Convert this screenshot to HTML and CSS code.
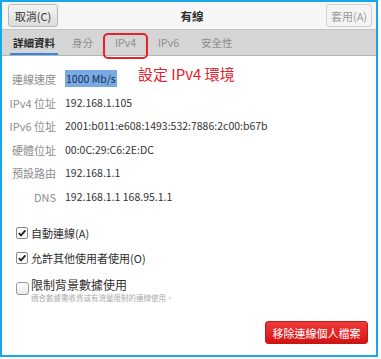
FILE: index.html
```html
<!DOCTYPE html>
<html>
<head>
<meta charset="utf-8">
<link rel="stylesheet" href="styles.css">
</head>
<body>
<div class="frame">
  <div class="header">
    <button class="btn cancel">取消(C)</button>
    <div class="title">有線</div>
    <button class="btn apply">套用(A)</button>
  </div>
  <div class="tabs">
    <div class="tab active">詳細資料</div>
    <div class="tab">身分</div>
    <div class="tab ipv4">IPv4<span class="circle"></span></div>
    <div class="tab">IPv6</div>
    <div class="tab">安全性</div>
  </div>
  <div class="content">
    <div class="info">
      <div class="label">連線速度</div><div class="value"><span class="sel">1000 Mb/s</span><span class="note">設定 IPv4 環境</span></div>
      <div class="label">IPv4 位址</div><div class="value">192.168.1.105</div>
      <div class="label">IPv6 位址</div><div class="value">2001:b011:e608:1493:532:7886:2c00:b67b</div>
      <div class="label">硬體位址</div><div class="value">00:0C:29:C6:2E:DC</div>
      <div class="label">預設路由</div><div class="value">192.168.1.1</div>
      <div class="label">DNS</div><div class="value">192.168.1.1 168.95.1.1</div>
    </div>
    <div class="checks">
      <div class="check"><span class="box checked"><svg viewBox="0 0 10 10" width="10" height="10"><path d="M1.8 5.2 L4 7.4 L8.4 2.4" fill="none" stroke="#222" stroke-width="1.8"/></svg></span>自動連線(A)</div>
      <div class="check"><span class="box checked"><svg viewBox="0 0 10 10" width="10" height="10"><path d="M1.8 5.2 L4 7.4 L8.4 2.4" fill="none" stroke="#222" stroke-width="1.8"/></svg></span>允許其他使用者使用(O)</div>
      <div class="check limit"><span class="box round"></span><div><div>限制背景數據使用</div><div class="sub">適合數據需收費或有流量限制的連線使用。</div></div></div>
    </div>
    <div class="footer">
      <button class="btn remove">移除連線個人檔案</button>
    </div>
  </div>
</div>
</body>
</html>
```
FILE: styles.css
```css
* { box-sizing: border-box; }
body {
  margin: 0;
  background: #fff;
  font-family: "Noto Sans CJK TC", "Noto Sans", sans-serif;
}
.frame {
  width: 378px;
  height: 357px;
  border: 2px solid #14a7ea;
  display: flex;
  flex-direction: column;
  background: #fff;
}
.header {
  height: 28px;
  background: #f6f6f6;
  border-bottom: 1px solid #c4c4c4;
  display: flex;
  align-items: center;
  padding: 0 4px 0 6px;
}
.btn {
  font-family: inherit;
  font-size: 11px;
  border-radius: 3px;
  border: 1px solid #b8b8b8;
  padding: 0;
  height: 23px;
}
.cancel {
  width: 50px;
  color: #333;
  background: linear-gradient(#f4f4f4, #dcdcdc);
}
.title {
  flex: 1;
  text-align: center;
  font-size: 11.5px;
  font-weight: bold;
  color: #2e2e2e;
}
.apply {
  width: 46px;
  color: #9a9a9a;
  background: #f4f4f4;
  border-color: #cfcfcf;
}
.tabs {
  height: 26px;
  background: #d5d5d5;
  border-bottom: 1px solid #b4b4b4;
  display: flex;
  align-items: stretch;
  padding-left: 8px;
}
.tab {
  font-size: 10.5px;
  color: #8e8e8e;
  padding: 0 2px;
  display: flex;
  align-items: center;
  margin-right: 18px;
  position: relative;
}
.tab.active {
  color: #2a2a2a;
  font-weight: bold;
  border-bottom: 2px solid #3584e4;
  padding: 2px 3px 0 3px;
  margin-right: 12px;
}
.circle {
  position: absolute;
  left: -10px;
  top: 3px;
  width: 45px;
  height: 26px;
  border: 2px solid #e8202a;
  border-radius: 5px;
}
.content {
  flex: 1;
  display: flex;
  flex-direction: column;
  padding: 15px 0 10px 0;
}
.info {
  display: grid;
  grid-template-columns: 54px 1fr;
  column-gap: 9px;
  row-gap: 7.6px;
  align-items: center;
}
.label {
  font-size: 11px;
  color: #8c8c8c;
  text-align: right;
  height: 16px;
  line-height: 16px;
}
.value {
  font-size: 10.5px;
  color: #333;
  height: 16px;
  line-height: 16px;
  white-space: nowrap;
  position: relative;
}
.sel {
  background: #7aaae2;
  color: #12305a;
  padding: 1px 1px;
}
.note {
  position: absolute;
  left: 73px;
  top: -5px;
  color: #e8202a;
  font-size: 15px;
}
.checks {
  margin-top: 21px;
  padding-left: 14px;
  display: flex;
  flex-direction: column;
  gap: 10px;
}
.check {
  display: flex;
  align-items: center;
  font-size: 11px;
  color: #2e2e2e;
  height: 15px;
}
.box {
  width: 12px;
  height: 12px;
  border: 1px solid #888;
  border-radius: 2px;
  background: #fafafa;
  margin-right: 3px;
  display: flex;
  align-items: center;
  justify-content: center;
}
.check.limit {
  align-items: flex-start;
  height: auto;
  font-size: 12px;
}
.box.round {
  width: 13px;
  height: 13px;
  border-radius: 3px;
  border-color: #999;
  background: linear-gradient(#fff, #e8e8e8);
  margin-top: 6px;
  margin-right: 2px;
}
.sub {
  font-size: 7.5px;
  color: #aaa;
  margin-top: -1px;
}
.footer {
  margin-top: auto;
  display: flex;
  justify-content: flex-end;
  padding-right: 8px;
  padding-bottom: 1px;
}
.remove {
  width: 103px;
  height: 23px;
  color: #fff;
  font-size: 11px;
  border-color: #b91b1b;
  background: linear-gradient(#f03a3a, #d51212);
}
```
